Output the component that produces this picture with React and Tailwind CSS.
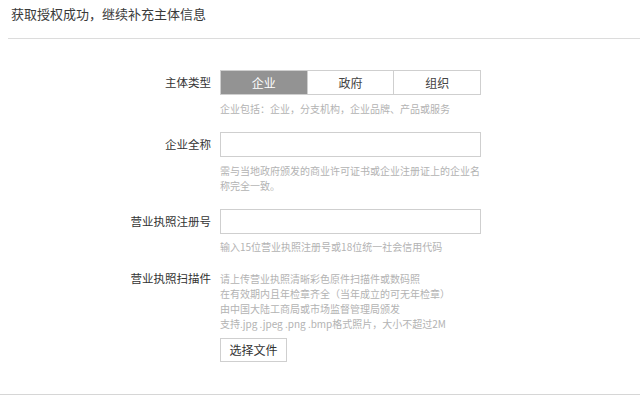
import React from "react";

const font = { fontFamily: '"Noto Sans CJK SC", "Noto Sans", sans-serif' };

function Label({ children, className = "" }) {
  return (
    <div className={`w-[211px] shrink-0 text-right text-[11.5px] text-[#333] ${className}`}>
      {children}
    </div>
  );
}

export default function App() {
  return (
    <div style={font} className="w-[640px] h-[396px] bg-white overflow-hidden">
      <div className="h-[395px] border-b border-[#d6d6d6] flex flex-col">
        <div className="ml-2 h-[39px] border-b border-[#dcdcdc] pl-[3px] pt-[4px] text-[13px] leading-[20px] text-[#3a3a3a]">
          获取授权成功，继续补充主体信息
        </div>

        {/* Row 1 */}
        <div className="mt-[31px] flex gap-[9px]">
          <Label className="leading-[25px]">主体类型</Label>
          <div className="w-[261px]">
            <div className="flex h-[25px] border border-[#cfcfcf] text-[12px]">
              <div className="flex-1 flex items-center justify-center bg-[#939393] text-white">企业</div>
              <div className="flex-1 flex items-center justify-center border-l border-[#cfcfcf] text-[#444]">政府</div>
              <div className="flex-1 flex items-center justify-center border-l border-[#cfcfcf] text-[#444]">组织</div>
            </div>
            <div className="mt-[5.5px] text-[10px] leading-[15px] text-[#b3b3b3]">
              企业包括：企业，分支机构，企业品牌、产品或服务
            </div>
          </div>
        </div>

        {/* Row 2 */}
        <div className="mt-[16.5px] flex gap-[9px]">
          <Label className="leading-[25px]">企业全称</Label>
          <div className="w-[261px]">
            <div className="h-[25px] border border-[#cfcfcf]" />
            <div className="mt-[5.5px] w-[262px] text-[10px] leading-[15px] text-[#b3b3b3]">
              需与当地政府颁发的商业许可证书或企业注册证上的企业名称完全一致。
            </div>
          </div>
        </div>

        {/* Row 3 */}
        <div className="mt-[16.5px] flex gap-[9px]">
          <Label className="leading-[25px]">营业执照注册号</Label>
          <div className="w-[261px]">
            <div className="h-[25px] border border-[#cfcfcf]" />
            <div className="mt-[4.5px] text-[10px] leading-[15px] text-[#b3b3b3]">
              输入15位营业执照注册号或18位统一社会信用代码
            </div>
          </div>
        </div>

        {/* Row 4 */}
        <div className="mt-[17px] flex gap-[9px]">
          <Label className="leading-[15px]">营业执照扫描件</Label>
          <div className="w-[300px]">
            <div className="text-[10px] leading-[15px] text-[#b3b3b3]">
              <div>请上传营业执照清晰彩色原件扫描件或数码照</div>
              <div>在有效期内且年检章齐全（当年成立的可无年检章）</div>
              <div>由中国大陆工商局或市场监督管理局颁发</div>
              <div>支持.jpg .jpeg .png .bmp格式照片，大小不超过2M</div>
            </div>
            <div className="mt-[7.5px] w-[67px] h-[24px] border border-[#cfcfcf] flex items-center justify-center text-[12px] text-[#333]">
              选择文件
            </div>
          </div>
        </div>
      </div>
    </div>
  );
}
